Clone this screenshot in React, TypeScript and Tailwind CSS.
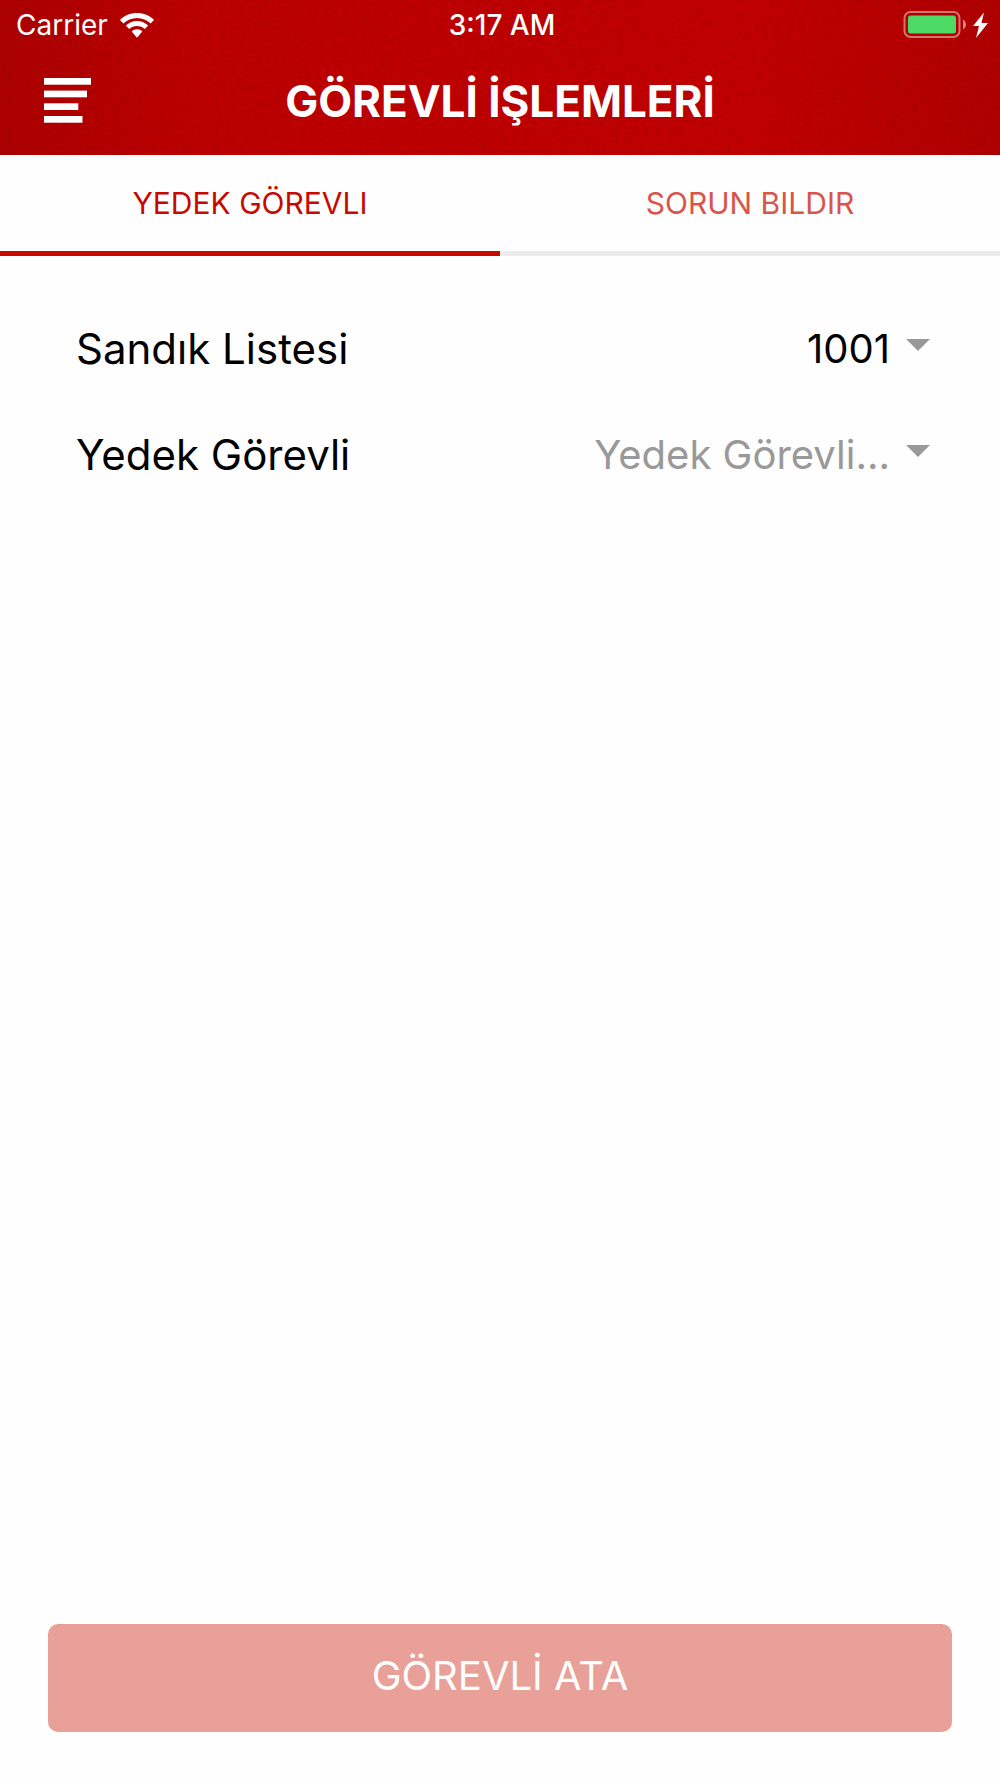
import { useState } from 'react';
import type { ReactNode } from 'react';

const TABS = ['YEDEK GÖREVLI', 'SORUN BILDIR'];

function WifiIcon() {
  return (
    <svg width="34" height="25" viewBox="0 0 34 25" fill="#fff" aria-hidden="true">
      <path d="M17 0C10.400 0 4.300 2.600 0 6.900L3.400 10.600C6.900 7.200 11.700 5.100 17 5.100S27.100 7.200 30.600 10.600L34 6.900C29.700 2.600 23.600 0 17 0Z" />
      <path d="M17 8C12.600 8 8.700 9.700 5.800 12.600L9.200 16.100C11.200 14.100 14 12.900 17 12.900S22.800 14.100 24.800 16.100L28.200 12.600C25.300 9.700 21.400 8 17 8Z" />
      <path d="M17 16.200C14.900 16.200 13.100 17 11.700 18.400L17 24.800L22.300 18.400C20.900 17 19.100 16.200 17 16.200Z" />
    </svg>
  );
}

function BatteryIcon() {
  return (
    <svg width="85" height="28" viewBox="0 0 85 28" aria-hidden="true">
      <rect x="1.500" y="1" width="55" height="25" rx="6" fill="none" stroke="#fff" strokeOpacity="0.45" strokeWidth="2" />
      <rect x="5" y="4.500" width="48" height="18" rx="2.500" fill="#4cd964" />
      <path d="M60 8.500C62 9.500 63 11.500 63 13.500S62 17.500 60 18.500Z" fill="#fff" fillOpacity="0.5" />
      <path d="M81 1.500L70 15H76L73 27L85 12H78.500Z" fill="#fff" />
    </svg>
  );
}

function MenuIcon() {
  return (
    <svg width="47" height="45" viewBox="0 0 47 45" fill="#fff" aria-hidden="true">
      <rect width="47" height="6.700" />
      <rect y="12.600" width="43" height="6.700" />
      <rect y="25.300" width="34.300" height="6.700" />
      <rect y="38" width="38.500" height="6.700" />
    </svg>
  );
}

// Woven fabric grain laid over the red header
function FabricTexture() {
  return (
    <svg className="absolute inset-0 h-full w-full" aria-hidden="true">
      <filter id="fabric">
        <feTurbulence type="fractalNoise" baseFrequency="0.16 0.3" numOctaves="3" seed="4" />
        <feColorMatrix values="0 0 0 0 0.25  0 0 0 0 0  0 0 0 0 0  1.2 0 0 0 -0.48" />
      </filter>
      <rect width="100%" height="100%" filter="url(#fabric)" opacity="0.5" />
    </svg>
  );
}

function Header() {
  return (
    <header className="relative bg-[linear-gradient(to_right,#ac0000,#bd0000_20%,#c20000_75%,#b00000)] text-white">
      <FabricTexture />
      <div className="relative grid h-[50px] grid-cols-[1fr_auto_1fr] items-center pr-3 pl-4 text-[28px] leading-8">
        <div className="flex items-center gap-3">
          <span>Carrier</span>
          <WifiIcon />
        </div>
        <span className="font-medium">3:17 AM</span>
        <div className="flex justify-end">
          <BatteryIcon />
        </div>
      </div>
      <div className="relative grid h-[105px] grid-cols-[1fr_auto_1fr] items-center px-11 pb-1">
        <button type="button" aria-label="Menü" className="justify-self-start">
          <MenuIcon />
        </button>
        <h1 className="text-[44px] leading-[48px] font-bold">GÖREVLİ İŞLEMLERİ</h1>
      </div>
    </header>
  );
}

type FieldProps = {
  id: string;
  label: string;
  muted?: boolean;
  children: ReactNode;
};

function SelectField({ id, label, muted, children }: FieldProps) {
  return (
    <div className="flex h-[106px] items-center justify-between">
      <label htmlFor={id} className="text-[42px] text-black">{label}</label>
      <div className="flex items-center gap-4 text-[40px]">
        <select
          id={id}
          className={`field-sizing-content appearance-none bg-transparent text-right outline-none ${muted ? 'text-[#999999]' : 'text-black'}`}
        >
          {children}
        </select>
        <svg width="24" height="20" viewBox="0 0 24 20" fill="#999" aria-hidden="true">
          <path d="M0 0H24L12 12Z" />
        </svg>
      </div>
    </div>
  );
}

export default function App() {
  const [active, setActive] = useState(0);

  return (
    <div className="flex min-h-screen flex-col bg-[#fefefe] font-['Inter',sans-serif]">
      <Header />

      <nav role="tablist" className="grid grid-cols-2">
        {TABS.map((tab, i) => (
          <button
            key={tab}
            type="button"
            role="tab"
            aria-selected={active === i}
            onClick={() => setActive(i)}
            className={`h-[101px] border-b-5 text-[30px] leading-8 ${
              active === i ? 'border-[#c70a00] text-[#c70a00]' : 'border-[#ececec] text-[#d9544a]'
            }`}
          >
            {tab}
          </button>
        ))}
      </nav>

      <main className="flex-1 pt-10 pr-[70px] pl-[76px] leading-[48px]">
        <SelectField id="sandik" label="Sandık Listesi">
          <option>1001</option>
        </SelectField>
        <SelectField id="yedek" label="Yedek Görevli" muted>
          <option>Yedek Görevli...</option>
        </SelectField>
      </main>

      <footer className="px-12 pb-[46px]">
        <button type="button" className="h-[108px] w-full rounded-[10px] bg-[#e8a099] pb-1 text-[40px] leading-[48px] text-white">
          GÖREVLİ ATA
        </button>
      </footer>
    </div>
  );
}
